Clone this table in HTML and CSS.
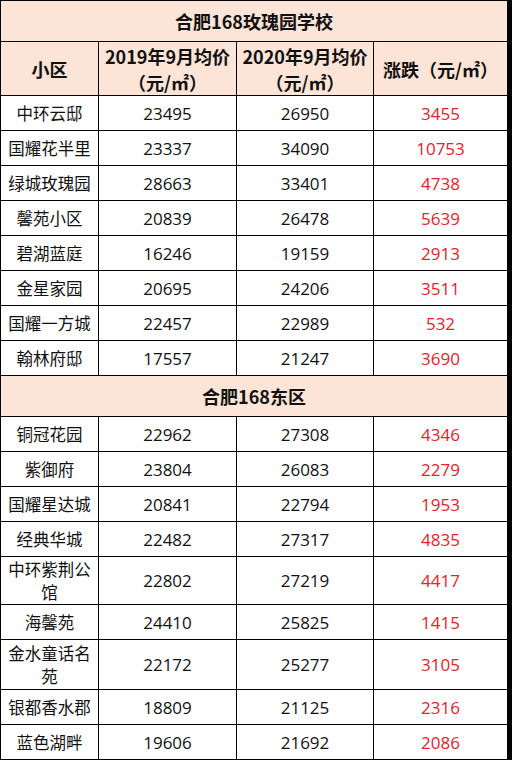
FILE: index.html
```html
<!DOCTYPE html>
<html lang="zh-CN">
<head>
<meta charset="utf-8">
<title>合肥168学区房价</title>
<link rel="stylesheet" href="styles.css">
</head>
<body>
<div class="sheet">
  <div class="cell title">合肥168玫瑰园学校</div>
  <div class="cell head">小区</div>
  <div class="cell head two"><span>2019年9月均价</span><span>（元/㎡）</span></div>
  <div class="cell head two"><span>2020年9月均价</span><span>（元/㎡）</span></div>
  <div class="cell head">涨跌（元/㎡）</div>

  <div class="cell name">中环云邸</div><div class="cell num">23495</div><div class="cell num">26950</div><div class="cell num up">3455</div>
  <div class="cell name">国耀花半里</div><div class="cell num">23337</div><div class="cell num">34090</div><div class="cell num up">10753</div>
  <div class="cell name">绿城玫瑰园</div><div class="cell num">28663</div><div class="cell num">33401</div><div class="cell num up">4738</div>
  <div class="cell name">馨苑小区</div><div class="cell num">20839</div><div class="cell num">26478</div><div class="cell num up">5639</div>
  <div class="cell name">碧湖蓝庭</div><div class="cell num">16246</div><div class="cell num">19159</div><div class="cell num up">2913</div>
  <div class="cell name">金星家园</div><div class="cell num">20695</div><div class="cell num">24206</div><div class="cell num up">3511</div>
  <div class="cell name">国耀一方城</div><div class="cell num">22457</div><div class="cell num">22989</div><div class="cell num up">532</div>
  <div class="cell name">翰林府邸</div><div class="cell num">17557</div><div class="cell num">21247</div><div class="cell num up">3690</div>

  <div class="cell title">合肥168东区</div>

  <div class="cell name">铜冠花园</div><div class="cell num">22962</div><div class="cell num">27308</div><div class="cell num up">4346</div>
  <div class="cell name">紫御府</div><div class="cell num">23804</div><div class="cell num">26083</div><div class="cell num up">2279</div>
  <div class="cell name">国耀星达城</div><div class="cell num">20841</div><div class="cell num">22794</div><div class="cell num up">1953</div>
  <div class="cell name">经典华城</div><div class="cell num">22482</div><div class="cell num">27317</div><div class="cell num up">4835</div>
  <div class="cell name">中环紫荆公馆</div><div class="cell num">22802</div><div class="cell num">27219</div><div class="cell num up">4417</div>
  <div class="cell name">海馨苑</div><div class="cell num">24410</div><div class="cell num">25825</div><div class="cell num up">1415</div>
  <div class="cell name">金水童话名苑</div><div class="cell num">22172</div><div class="cell num">25277</div><div class="cell num up">3105</div>
  <div class="cell name">银都香水郡</div><div class="cell num">18809</div><div class="cell num">21125</div><div class="cell num up">2316</div>
  <div class="cell name">蓝色湖畔</div><div class="cell num">19606</div><div class="cell num">21692</div><div class="cell num up">2086</div>
</div>
</body>
</html>
```

FILE: styles.css
```css
html, body {
  margin: 0;
  padding: 0;
  background: #ffffff;
}

.sheet {
  width: 512px;
  box-sizing: border-box;
  padding: 1px 5px 1px 1px;
  background: #000000;
  display: grid;
  grid-template-columns: 97px 137px 136px 133px;
  grid-template-rows: 40px 53px repeat(8, 34px) 40px repeat(4, 34px) 47px 34px 49px 34px 34px;
  gap: 1px;
  font-family: "Noto Sans CJK SC", sans-serif;
  color: #111111;
  text-spacing-trim: space-all;
  font-feature-settings: "chws" 0, "halt" 0, "palt" 0;
}

.cell {
  background: #ffffff;
  display: flex;
  align-items: center;
  justify-content: center;
  text-align: center;
  overflow: hidden;
}

.title {
  grid-column: 1 / -1;
  background: #fce4d6;
  font-weight: 700;
  font-size: 18px;
}

.head {
  background: #fce4d6;
  font-weight: 700;
  font-size: 18px;
  line-height: 26px;
  white-space: nowrap;
}

.head.two {
  flex-direction: column;
}

.name {
  font-size: 16.5px;
  line-height: 22.5px;
  padding: 0 2px;
}

.num {
  font-family: "Open Sans", "Noto Sans CJK SC", sans-serif;
  font-size: 17px;
}

.up {
  color: #e3222b;
}
```
